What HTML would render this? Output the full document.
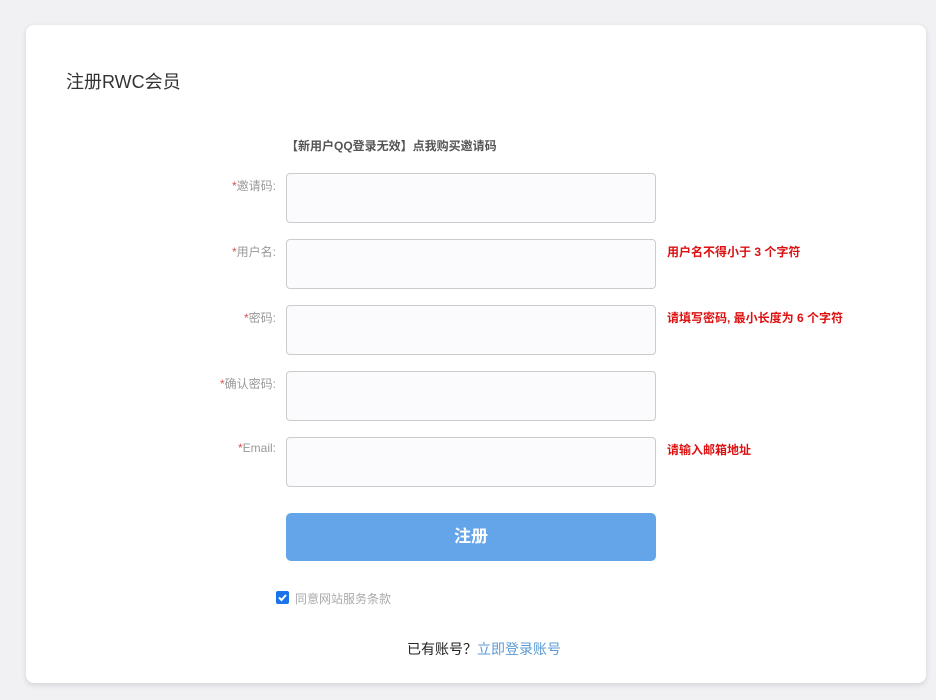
<!DOCTYPE html>
<html><head><meta charset="utf-8"><style>
*{margin:0;padding:0;box-sizing:border-box}
body{width:936px;height:700px;background:#f1f0f3;font-family:"Liberation Sans","Noto Sans CJK SC",sans-serif;position:relative;overflow:hidden}
.card{position:absolute;left:26px;top:25px;width:900px;height:658px;background:#fff;border-radius:8px;box-shadow:0 2px 6px rgba(0,0,0,.12)}
.t{position:absolute;left:66px;top:68px;font-size:18px;color:#333}
.note{position:absolute;left:286px;top:137px;font-size:12px;font-weight:bold;color:#555}
.lab{position:absolute;width:276px;left:0;text-align:right;font-size:12px;color:#999}
.lab b{color:#d9534f;font-weight:normal}
.in{position:absolute;left:286px;width:370px;height:50px;background:#fbfafc;border:1px solid #ccc;border-radius:4px}
.err{position:absolute;left:667px;font-size:12px;font-weight:bold;color:#d11}
.btn{position:absolute;left:286px;top:513px;width:370px;height:48px;background:#64a5ea;border-radius:5px;color:#fff;font-size:17px;font-weight:bold;text-align:center;line-height:48px}
.cb{position:absolute;left:276px;top:591px;width:13px;height:13px;background:#1a73e8;border-radius:2px}
.cbt{position:absolute;left:295px;top:590px;font-size:12px;color:#aaa}
.bot{position:absolute;left:407px;top:639px;font-size:14px;color:#222}
.bot span{color:#5b9bd5}
</style></head><body>
<div class="card"></div>
<div class="t">注册RWC会员</div>
<div class="note">【新用户QQ登录无效】点我购买邀请码</div>
<div class="lab" style="top:177px"><b>*</b>邀请码:</div><div class="in" style="top:173px"></div>
<div class="lab" style="top:243px"><b>*</b>用户名:</div><div class="in" style="top:239px"></div>
<div class="err" style="top:243px">用户名不得小于 3 个字符</div>
<div class="lab" style="top:309px"><b>*</b>密码:</div><div class="in" style="top:305px"></div>
<div class="err" style="top:309px">请填写密码, 最小长度为 6 个字符</div>
<div class="lab" style="top:375px"><b>*</b>确认密码:</div><div class="in" style="top:371px"></div>
<div class="lab" style="top:441px"><b>*</b>Email:</div><div class="in" style="top:437px"></div>
<div class="err" style="top:441px">请输入邮箱地址</div>
<div class="btn">注册</div>
<div class="cb"><svg width="13" height="13" viewBox="0 0 13 13"><path d="M3 6.5l2.5 2.5L10 4" stroke="#fff" stroke-width="2" fill="none"/></svg></div>
<div class="cbt">同意网站服务条款</div>
<div class="bot">已有账号？<span>立即登录账号</span></div>
</body></html>
